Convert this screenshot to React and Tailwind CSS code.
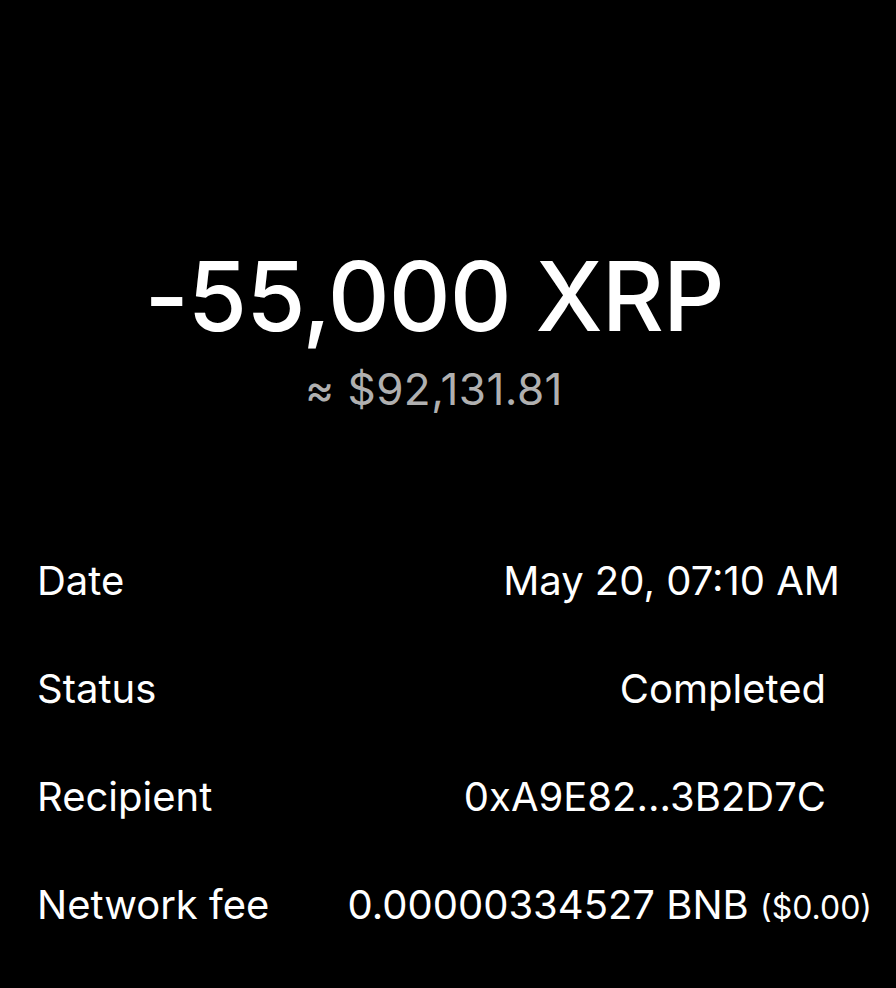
const rows = [
  { label: "Date", value: "May 20, 07:10 AM", pad: "pr-[56px]" },
  { label: "Status", value: "Completed", pad: "pr-[70px]" },
  { label: "Recipient", value: "0xA9E82...3B2D7C", pad: "pr-[70px]" },
];

export default function App() {
  return (
    <div className="flex h-[988px] w-[896px] flex-col bg-black text-white font-['Inter',sans-serif]">
      <div className="flex flex-col items-center pr-[28px] pt-[246px]">
        <h1 className="text-[96px] leading-[100px] font-medium tracking-[-0.01em]">-55,000 XRP</h1>
        <p className="mt-[19px] text-[44px] leading-[48px] tracking-[0.01em] text-[#b0b0b0]">≈ $92,131.81</p>
      </div>
      <div className="mt-[144px] flex flex-col gap-[60px] pl-[37px] text-[40px] leading-[48px]">
        {rows.map((row) => (
          <div key={row.label} className={`flex justify-between ${row.pad}`}>
            <span>{row.label}</span>
            <span>{row.value}</span>
          </div>
        ))}
        <div className="flex items-baseline justify-between pr-[24px]">
          <span>Network fee</span>
          <span>
            0.00000334527 BNB <span className="text-[32px]">($0.00)</span>
          </span>
        </div>
      </div>
    </div>
  );
}
